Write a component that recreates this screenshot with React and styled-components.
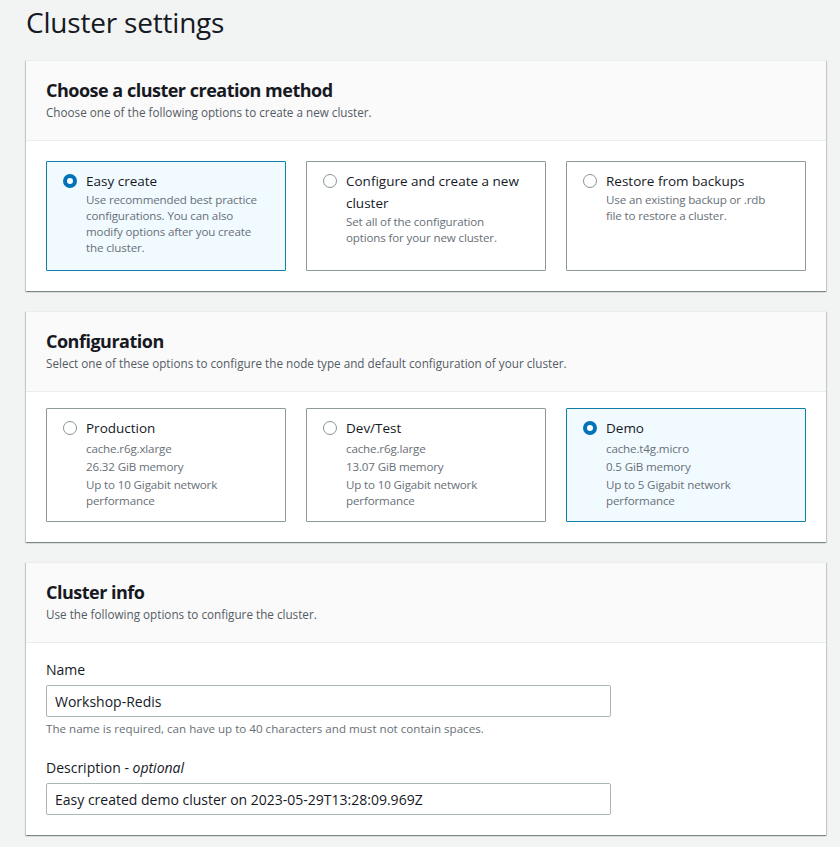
import React from 'react';
import styled, { createGlobalStyle } from 'styled-components';

const GlobalStyle = createGlobalStyle`
  body {
    margin: 0;
    background: #f2f3f3;
    font-family: "Open Sans", "Noto Sans", sans-serif;
    color: #16191f;
  }
`;

const Page = styled.div`
  padding: 4px 14px 20px 26px;
  display: flex;
  flex-direction: column;
  gap: 20px;
`;

const PageTitle = styled.h1`
  margin: 0;
  font-size: 28px;
  line-height: 36px;
  font-weight: 400;
  letter-spacing: -0.2px;
  color: #16191f;
`;

const Panel = styled.section`
  background: #fff;
  box-shadow: 0 1px 1px 0 rgba(0, 28, 36, 0.3), 1px 1px 1px 0 rgba(0, 28, 36, 0.15),
    -1px 1px 1px 0 rgba(0, 28, 36, 0.15);
  border-top: 1px solid #eaeded;
`;

const PanelHeader = styled.header`
  background: #fafafa;
  border-bottom: 1px solid #eaeded;
  padding: 18px 20px 20px;
`;

const PanelTitle = styled.h2`
  margin: 0;
  font-size: 18px;
  line-height: 22px;
  font-weight: 700;
  letter-spacing: -0.5px;
`;

const PanelSubtitle = styled.p`
  margin: 3px 0 0;
  font-size: 11.7px;
  line-height: 16px;
  color: #545b64;
`;

const PanelBody = styled.div`
  padding: ${(p) => p.$top || 20}px 20px 20px;
`;

const CardGrid = styled.div`
  display: grid;
  grid-template-columns: repeat(3, 1fr);
  gap: 20px;
`;

const Card = styled.div`
  display: flex;
  gap: 9px;
  padding: 8px 22px ${(p) => p.$pb}px 16px;
  border: 1px solid ${(p) => (p.$selected ? '#0f7fa8' : '#8d999a')};
  background: ${(p) => (p.$selected ? '#f1faff' : '#fff')};
  border-radius: 1px;
`;

const Radio = styled.span`
  flex: none;
  width: 14px;
  height: 14px;
  margin-top: 4px;
  border-radius: 50%;
  box-sizing: border-box;
  border: ${(p) => (p.$checked ? '4px solid #0073bb' : '1px solid #879596')};
  background: #fff;
`;

const CardText = styled.div`
  display: flex;
  flex-direction: column;
`;

const CardTitle = styled.div`
  font-size: 13.5px;
  line-height: 22px;
  color: #16191f;
`;

const CardDesc = styled.div`
  font-size: 11.6px;
  line-height: 16px;
  letter-spacing: -0.15px;
  color: #687078;
  margin-top: ${(p) => (p.$spaced ? '2px' : '0')};
`;

const Field = styled.div`
  display: flex;
  flex-direction: column;
  & + & {
    margin-top: 21px;
  }
`;

const Label = styled.label`
  font-size: 14px;
  line-height: 20px;
  color: #16191f;
  margin-bottom: 5px;

  em {
    font-style: italic;
  }
`;

const Input = styled.input`
  width: 565px;
  height: 32px;
  box-sizing: border-box;
  border: 1px solid #aab7b8;
  border-radius: 2px;
  padding: 0 8px;
  font-family: inherit;
  font-size: 14px;
  color: #16191f;
  background: #fff;
  outline: none;
`;

const Hint = styled.div`
  margin-top: 4px;
  font-size: 11.6px;
  line-height: 16px;
  color: #687078;
`;

const methods = [
  {
    title: 'Easy create',
    desc: ['Use recommended best practice configurations. You can also modify options after you create the cluster.'],
    selected: true,
  },
  {
    title: 'Configure and create a new cluster',
    desc: ['Set all of the configuration options for your new cluster.'],
  },
  {
    title: 'Restore from backups',
    desc: ['Use an existing backup or .rdb file to restore a cluster.'],
  },
];

const configs = [
  {
    title: 'Production',
    desc: ['cache.r6g.xlarge', '26.32 GiB memory', 'Up to 10 Gigabit network performance'],
  },
  {
    title: 'Dev/Test',
    desc: ['cache.r6g.large', '13.07 GiB memory', 'Up to 10 Gigabit network performance'],
  },
  {
    title: 'Demo',
    desc: ['cache.t4g.micro', '0.5 GiB memory', 'Up to 5 Gigabit network performance'],
    selected: true,
  },
];

function OptionCards({ options, spaced, pb }) {
  return (
    <CardGrid>
      {options.map((o) => (
        <Card key={o.title} $selected={o.selected} $pb={pb}>
          <Radio $checked={o.selected} />
          <CardText>
            <CardTitle>{o.title}</CardTitle>
            {o.desc.map((d) => (
              <CardDesc key={d} $spaced={spaced}>
                {d}
              </CardDesc>
            ))}
          </CardText>
        </Card>
      ))}
    </CardGrid>
  );
}

export default function App() {
  return (
    <>
      <GlobalStyle />
      <Page>
        <PageTitle>Cluster settings</PageTitle>

        <Panel>
          <PanelHeader>
            <PanelTitle>Choose a cluster creation method</PanelTitle>
            <PanelSubtitle>Choose one of the following options to create a new cluster.</PanelSubtitle>
          </PanelHeader>
          <PanelBody>
            <OptionCards options={methods} pb={14} />
          </PanelBody>
        </Panel>

        <Panel>
          <PanelHeader>
            <PanelTitle>Configuration</PanelTitle>
            <PanelSubtitle>
              Select one of these options to configure the node type and default configuration of your cluster.
            </PanelSubtitle>
          </PanelHeader>
          <PanelBody $top={16}>
            <OptionCards options={configs} spaced pb={12} />
          </PanelBody>
        </Panel>

        <Panel>
          <PanelHeader>
            <PanelTitle>Cluster info</PanelTitle>
            <PanelSubtitle>Use the following options to configure the cluster.</PanelSubtitle>
          </PanelHeader>
          <PanelBody $top={17}>
            <Field>
              <Label>Name</Label>
              <Input defaultValue="Workshop-Redis" />
              <Hint>The name is required, can have up to 40 characters and must not contain spaces.</Hint>
            </Field>
            <Field>
              <Label>
                Description - <em>optional</em>
              </Label>
              <Input defaultValue="Easy created demo cluster on 2023-05-29T13:28:09.969Z" />
            </Field>
          </PanelBody>
        </Panel>
      </Page>
    </>
  );
}
